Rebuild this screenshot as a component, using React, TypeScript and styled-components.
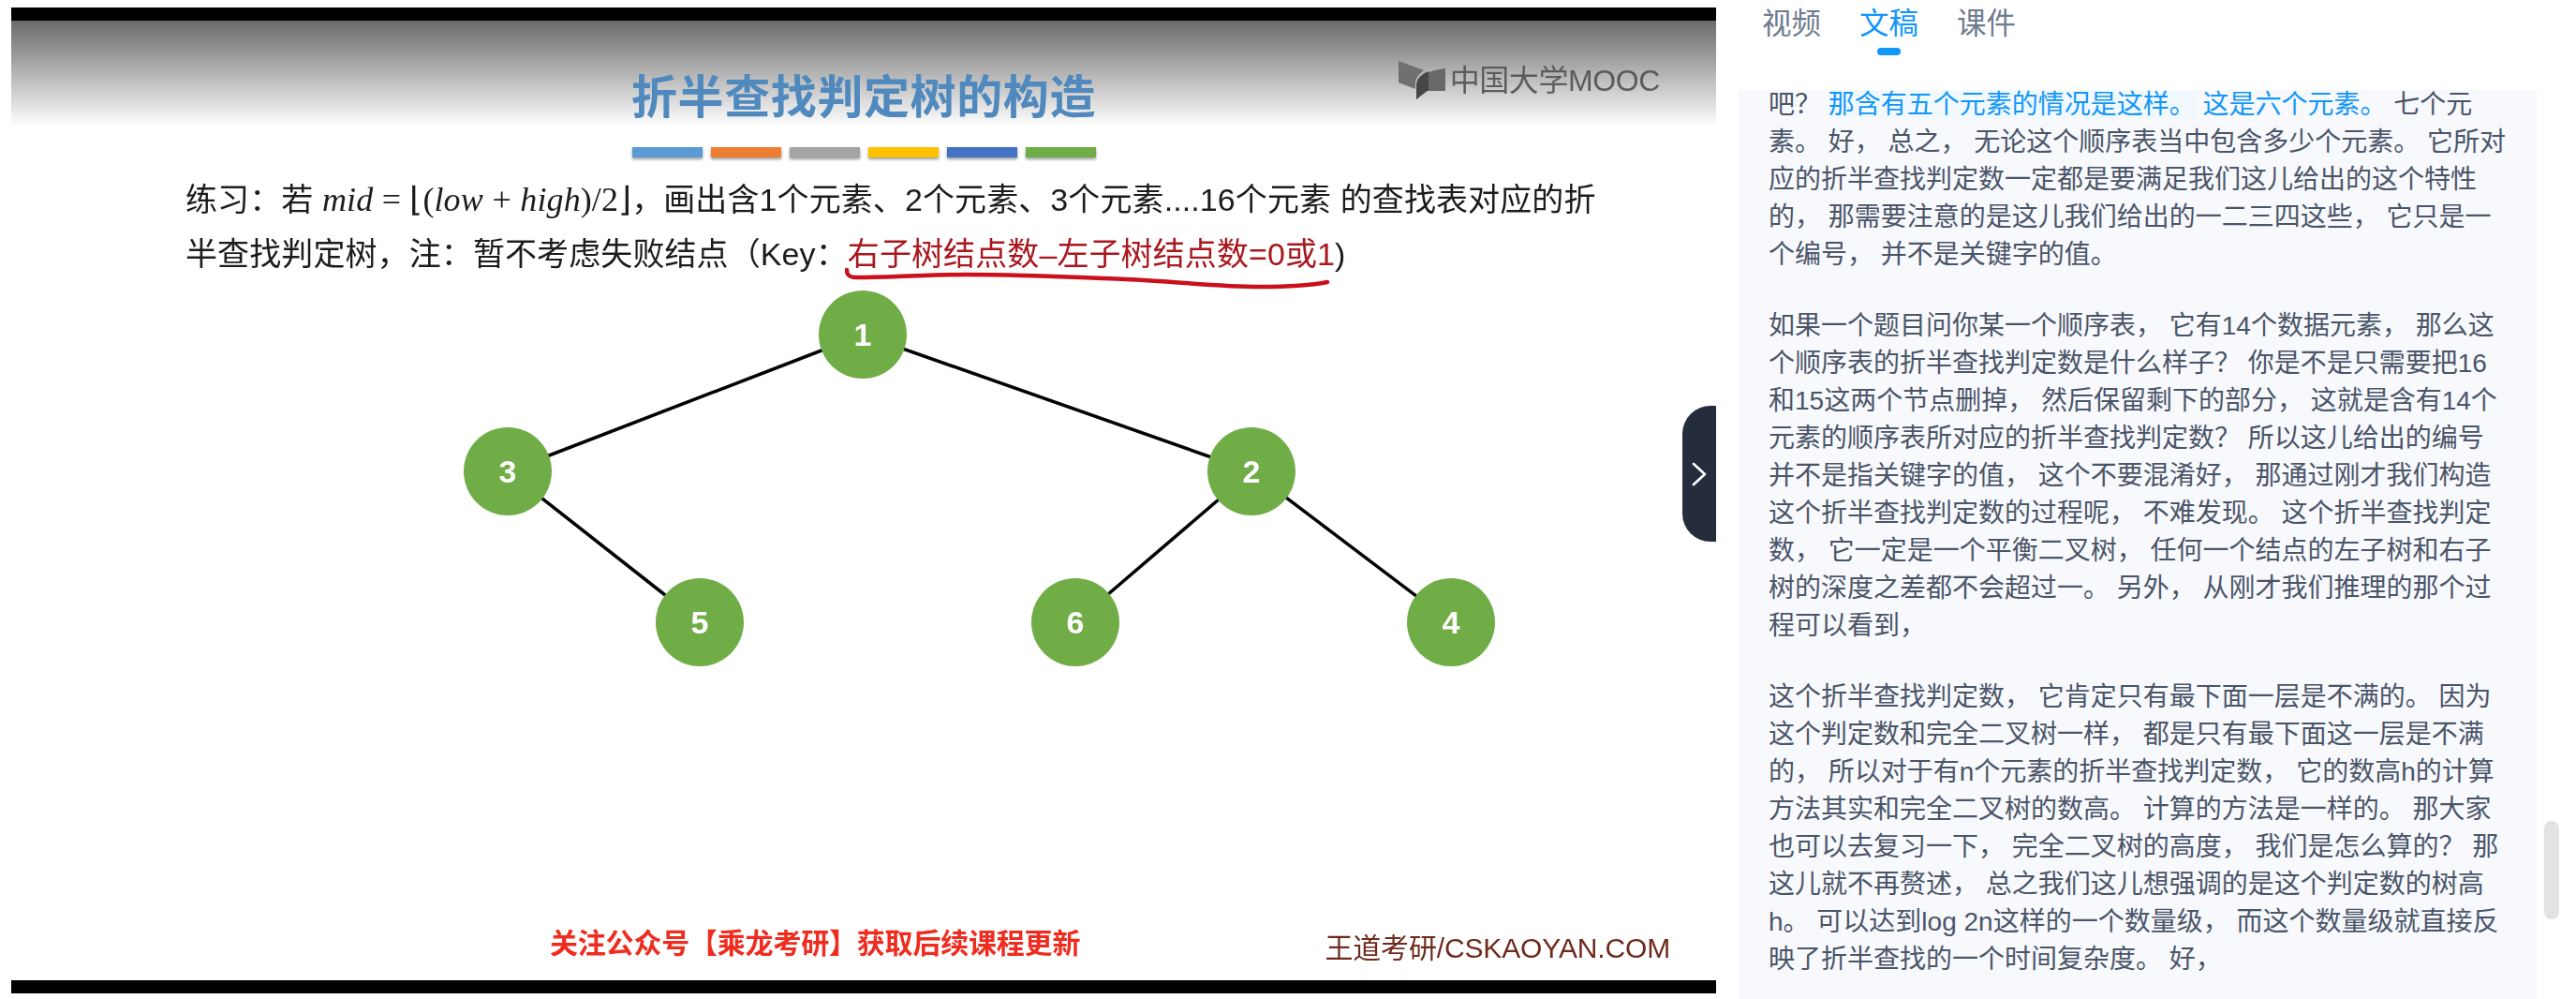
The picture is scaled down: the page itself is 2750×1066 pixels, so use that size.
import React from 'react';
import styled, {createGlobalStyle} from 'styled-components';

const SANS = `"Liberation Sans", "Noto Sans CJK SC", sans-serif`;

const GlobalStyle = createGlobalStyle`
html, body {
    margin: 0;
    padding: 0;
    background: #fff;
    overflow: hidden;
}
`;

const BAR_COLORS = ['#5b9bd5', '#ed7d31', '#a5a5a5', '#ffc000', '#4472c4', '#70ad47'];

const NODES = [
    {id: 1, x: 909, y: 57},
    {id: 3, x: 530, y: 203},
    {id: 2, x: 1324, y: 203},
    {id: 5, x: 735, y: 364},
    {id: 6, x: 1136, y: 364},
    {id: 4, x: 1537, y: 364},
];

const EDGES = [[1, 3], [1, 2], [3, 5], [2, 6], [2, 4]];

const nodeById = (id: number) => NODES.find((n) => n.id === id)!;

const App = () => {
    return (
        <Page>
            <GlobalStyle/>
            <VideoArea>
                <LetterBox/>
                <Slide>
                    <SlideHeader>
                        <span/>
                        <SlideTitle>折半查找判定树的构造</SlideTitle>
                        <Logo>
                            <svg width="52" height="44" viewBox="0 0 52 44">
                                <path d="M1 1 L28 11 C24 14 20 18 19 24 L19 31 L1 24 Z" fill="#707070"/>
                                <path d="M51 9 L51 33 L30 33 L20 42 L20 26 C22 18 32 11 51 9 Z" fill="#686868"/>
                                <path d="M20 26 C21 19 26 15 33 12 L33 32 L20 42 Z" fill="#474747"/>
                            </svg>
                            <LogoText>中国大学MOOC</LogoText>
                        </Logo>
                    </SlideHeader>
                    <ColorBars>
                        {BAR_COLORS.map((c) => <ColorBar key={c} $color={c}/>)}
                    </ColorBars>
                    <Exercise>
                        <ExerciseLine>
                            练习：若 <Formula>mid</Formula> <Upright>= ⌊(</Upright><Formula>low</Formula> <Upright>+</Upright> <Formula>high</Formula><Upright>)/2⌋</Upright>，画出含1个元素、2个元素、3个元素....16个元素 的查找表对应的折
                        </ExerciseLine>
                        <ExerciseLine>
                            半查找判定树，注：暂不考虑失败结点（Key：<KeyText>右子树结点数–左子树结点数=0或1
                                <Underline width="530" height="30" viewBox="0 0 530 30">
                                    <path d="M2 3 C2 9 5 11 12 11 C50 11 90 8 129 8 C190 8 250 11 300 13 C350 15 400 21 443 21 C470 21 500 19 515 16"
                                          fill="none" stroke="#c9101c" strokeWidth="4.5" strokeLinecap="round"/>
                                </Underline>
                            </KeyText>)
                        </ExerciseLine>
                    </Exercise>
                    <TreeCanvas>
                        <TreeEdges width="1820" height="420">
                            {EDGES.map(([a, b]) => (
                                <line key={`${a}-${b}`} x1={nodeById(a).x} y1={nodeById(a).y}
                                      x2={nodeById(b).x} y2={nodeById(b).y} stroke="#000" strokeWidth="3.5"/>
                            ))}
                        </TreeEdges>
                        {NODES.map((n) => (
                            <TreeNode key={n.id} style={{left: n.x - 47, top: n.y - 47}}>{n.id}</TreeNode>
                        ))}
                    </TreeCanvas>
                    <SlideFooter>
                        <FollowText>关注公众号【乘龙考研】获取后续课程更新</FollowText>
                        <SiteText>王道考研/CSKAOYAN.COM</SiteText>
                    </SlideFooter>
                </Slide>
                <LetterBox/>
                <CollapseHandle>
                    <svg width="16" height="26" viewBox="0 0 16 26">
                        <path d="M2 2 L14 13 L2 24" fill="none" stroke="#fff" strokeWidth="2.6" strokeLinecap="round" strokeLinejoin="round"/>
                    </svg>
                </CollapseHandle>
            </VideoArea>
            <SideColumn>
                <Tabs>
                    <Tab>视频</Tab>
                    <Tab $active>文稿</Tab>
                    <Tab>课件</Tab>
                </Tabs>
                <Transcript>
                    <TranscriptInner>
                        <Paragraph>
                            吧？ <Sentence $current>那含有五个元素的情况是这样。</Sentence> <Sentence>这是六个元素。</Sentence> 七个元素。 好， 总之， 无论这个顺序表当中包含多少个元素。 它所对应的折半查找判定数一定都是要满足我们这儿给出的这个特性的， 那需要注意的是这儿我们给出的一二三四这些， 它只是一个编号， 并不是关键字的值。
                        </Paragraph>
                        <Paragraph>
                            如果一个题目问你某一个顺序表， 它有14个数据元素， 那么这个顺序表的折半查找判定数是什么样子？ 你是不是只需要把16和15这两个节点删掉， 然后保留剩下的部分， 这就是含有14个元素的顺序表所对应的折半查找判定数？ 所以这儿给出的编号并不是指关键字的值， 这个不要混淆好， 那通过刚才我们构造这个折半查找判定数的过程呢， 不难发现。 这个折半查找判定数， 它一定是一个平衡二叉树， 任何一个结点的左子树和右子树的深度之差都不会超过一。 另外， 从刚才我们推理的那个过程可以看到，
                        </Paragraph>
                        <Paragraph>
                            这个折半查找判定数， 它肯定只有最下面一层是不满的。 因为这个判定数和完全二叉树一样， 都是只有最下面这一层是不满的， 所以对于有n个元素的折半查找判定数， 它的数高h的计算方法其实和完全二叉树的数高。 计算的方法是一样的。 那大家也可以去复习一下， 完全二叉树的高度， 我们是怎么算的？ 那这儿就不再赘述， 总之我们这儿想强调的是这个判定数的树高h。 可以达到log 2n这样的一个数量级， 而这个数量级就直接反映了折半查找的一个时间复杂度。 好，
                        </Paragraph>
                    </TranscriptInner>
                </Transcript>
                <ScrollThumb/>
            </SideColumn>
        </Page>
    );
};

export default App;

const Page = styled.div`
display: flex;
height: 1066px;
padding: 8px 0 0 12px;
box-sizing: border-box;
font-family: ${SANS};
`;

const VideoArea = styled.div`
position: relative;
display: flex;
flex-direction: column;
flex: none;
width: 1820px;
height: 1052px;
`;

const LetterBox = styled.div`
flex: none;
height: 14px;
background: #000;
`;

const Slide = styled.div`
flex: 1;
display: flex;
flex-direction: column;
min-height: 0;
background: linear-gradient(#6a6a6a, #fff) no-repeat;
background-size: 100% 113px;
background-color: #fff;
filter: blur(0.5px);
`;

const SlideHeader = styled.div`
display: grid;
grid-template-columns: 1fr auto 1fr;
height: 113px;
`;

const SlideTitle = styled.h1`
margin: 52px 0 0;
font-size: 49px;
line-height: 60px;
letter-spacing: 0.6px;
font-weight: 700;
color: #5089be;
`;

const Logo = styled.div`
justify-self: end;
display: flex;
align-items: center;
gap: 4px;
height: 44px;
margin: 42px 60px 0 0;
`;

const LogoText = styled.span`
font-size: 32px;
line-height: 40px;
color: #5c5c5c;
letter-spacing: -0.4px;
`;

const ColorBars = styled.div`
display: flex;
justify-content: center;
gap: 9px;
margin-top: 22px;
`;

const ColorBar = styled.div<{$color: string}>`
width: 75px;
height: 11px;
background: ${(p) => p.$color};
box-shadow: 0 2px 3px #999;
`;

const Exercise = styled.div`
margin-top: 16px;
padding-left: 186px;
font-size: 34px;
line-height: 58px;
letter-spacing: 0.1px;
color: #1c1c1c;
white-space: nowrap;
`;

const ExerciseLine = styled.div`
height: 58px;
`;

const Formula = styled.i`
font-family: "Liberation Serif", serif;
font-size: 36px;
line-height: 0;
`;

const Upright = styled.span`
font-family: "Liberation Serif", serif;
font-size: 36px;
line-height: 0;
`;

const KeyText = styled.span`
position: relative;
color: #a8181e;
`;

const Underline = styled.svg`
position: absolute;
left: -3px;
top: 33px;
`;

const TreeCanvas = styled.div`
position: relative;
flex: none;
height: 420px;
`;

const TreeEdges = styled.svg`
position: absolute;
left: 0;
top: 0;
`;

const TreeNode = styled.div`
position: absolute;
width: 94px;
height: 94px;
border-radius: 50%;
background: #70ad47;
color: #fff;
font-size: 34px;
font-weight: 700;
display: flex;
align-items: center;
justify-content: center;
`;

const SlideFooter = styled.div`
margin-top: auto;
display: flex;
align-items: flex-start;
justify-content: space-between;
padding: 0 49px 14px 575px;
`;

const FollowText = styled.div`
font-size: 30px;
line-height: 40px;
letter-spacing: -0.2px;
font-weight: 700;
color: #ee2c1f;
`;

const SiteText = styled.div`
padding-top: 5px;
font-size: 30px;
line-height: 40px;
letter-spacing: -0.15px;
color: #6e2a1c;
`;

const CollapseHandle = styled.div`
position: absolute;
right: 0;
top: 425px;
width: 36px;
height: 145px;
border-radius: 30px 0 0 30px;
background: #252c3b;
display: flex;
align-items: center;
justify-content: center;
`;

const SideColumn = styled.div`
position: relative;
flex: none;
display: flex;
flex-direction: column;
width: 852px;
margin: -8px 0 0 24px;
height: 1066px;
`;

const Tabs = styled.div`
flex: none;
display: flex;
gap: 41px;
height: 96px;
padding-left: 25px;
box-sizing: border-box;
`;

const Tab = styled.div<{$active?: boolean}>`
position: relative;
height: 48px;
font-size: 31.5px;
line-height: 50px;
color: ${(p) => (p.$active ? '#1296fa' : '#6f7b8f')};
&::after {
    content: "";
    display: ${(p) => (p.$active ? 'block' : 'none')};
    position: absolute;
    left: 19px;
    top: 51px;
    width: 25px;
    height: 8px;
    border-radius: 4px;
    background: #1296fa;
}
`;

const Transcript = styled.div`
flex: 1;
min-height: 0;
overflow: hidden;
background: #f7f9fd;
`;

const TranscriptInner = styled.div`
margin-top: -4px;
padding: 0 31px 0 32px;
`;

const Paragraph = styled.p`
margin: 0 0 36px;
font-size: 28px;
line-height: 40px;
color: #4b5568;
`;

const Sentence = styled.span<{$current?: boolean}>`
color: #1296fa;
background: ${(p) => (p.$current ? '#f1f9ff' : 'transparent')};
`;

const ScrollThumb = styled.div`
position: absolute;
left: 860px;
top: 876px;
width: 16px;
height: 105px;
border-radius: 8px;
background: #e3e3e3;
`;
